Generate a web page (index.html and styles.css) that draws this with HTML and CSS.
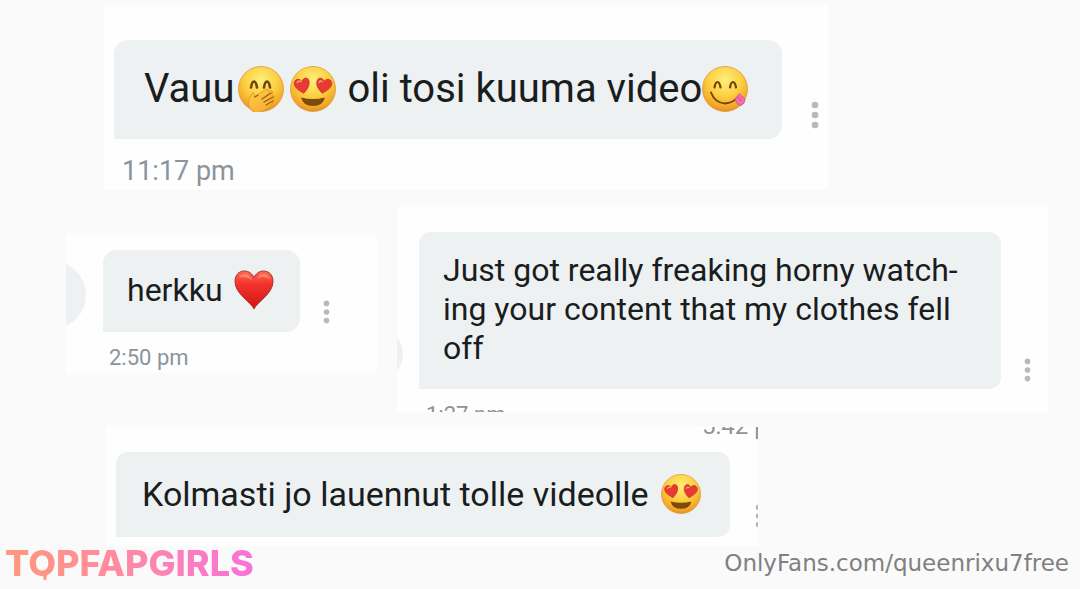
FILE: index.html
```html
<!DOCTYPE html>
<html lang="fi">
<head>
<meta charset="utf-8">
<meta name="viewport" content="width=device-width, initial-scale=1">
<title>Messages</title>
<link rel="stylesheet" href="styles.css">
</head>
<body>
<svg class="defs" aria-hidden="true">
  <defs>
    <radialGradient id="face" cx=".5" cy=".3" r=".72">
      <stop offset="0" stop-color="#ffee7c"/><stop offset=".5" stop-color="#fdd043"/><stop offset=".85" stop-color="#f4a526"/><stop offset="1" stop-color="#dd8a20"/>
    </radialGradient>
    <linearGradient id="red" x1="0" y1="0" x2="0" y2="1">
      <stop offset="0" stop-color="#ff6a55"/><stop offset=".35" stop-color="#f3322c"/><stop offset="1" stop-color="#cf1414"/>
    </linearGradient>
    <linearGradient id="hand" x1="0" y1="0" x2="1" y2="1">
      <stop offset="0" stop-color="#ffd04a"/><stop offset="1" stop-color="#f5a52c"/>
    </linearGradient>
    <symbol id="heart" viewBox="0 0 40 40">
      <path d="M20 39C17 32 1 24 1 11.500C1 5 5 1 10.500 1C15 1 18.500 4 20 7.500C21.500 4 25 1 29.500 1C35 1 39 5 39 11.500C39 24 23 32 20 39Z" fill="url(#red)" stroke="#a73531" stroke-width="1"/>
      <path d="M5 8Q8 3 13 4Q17 6 18 10Q10 5 5 8ZM23 9Q26 3 31 4Q35 5 36 9Q29 5 23 9Z" fill="#ff9b85" opacity=".65"/>
    </symbol>
    <symbol id="love" viewBox="0 0 46 46">
      <circle cx="23" cy="23" r="22.500" fill="url(#face)" stroke="#d99a3c" stroke-width=".8"/>
      <path d="M12.500 27.500C9.500 25 4.500 21.500 4.500 17C4.500 12.500 10 11 12.500 15.500C14.500 11 20 12 19.500 17C19 22 15.500 25 12.500 27.500Z" transform="rotate(-8 12 19)" fill="#e83a32" stroke="#c22c22" stroke-width=".7"/>
      <path d="M33.500 27.500C30.500 25 26.500 22 26.500 17C26.500 12 31.500 11 33.500 15.500C36 11 41.500 12.500 41.500 17C41.500 21.500 36.500 25 33.500 27.500Z" transform="rotate(8 34 19)" fill="#e83a32" stroke="#c22c22" stroke-width=".7"/>
      <path d="M7 17Q9 13.500 11.500 16M29 17Q30 13.500 32.500 16" stroke="#ff9784" stroke-width="1.500" fill="none"/>
      <path d="M11 31.500Q23 34.500 35 31.500Q33 40 23 40Q13 40 11 31.500Z" fill="#7b4b0c"/>
    </symbol>
    <symbol id="yum" viewBox="0 0 46 46">
      <circle cx="23" cy="23" r="22.500" fill="url(#face)" stroke="#d99a3c" stroke-width=".8"/>
      <path d="M12.500 21.500Q13.500 16 15.500 16Q17.500 16 18.500 21.500M28 21.500Q29 16 31 16Q33 16 34 21.500" fill="none" stroke="#71440b" stroke-width="2.200" stroke-linecap="round"/>
      <path d="M9 26.500Q13 37 23 37.500Q31 37 36 31" fill="none" stroke="#71440b" stroke-width="1.900" stroke-linecap="round"/>
      <path d="M33 33L37.500 27.500L43 33Q43 38 39 39.500Q35 39.500 33 33Z" fill="#f36da7" stroke="#d84e86" stroke-width=".8"/>
      <path d="M36 31L39.500 35" stroke="#cd4d80"/>
    </symbol>
    <symbol id="giggle" viewBox="0 0 46 46">
      <circle cx="23" cy="23" r="22.500" fill="url(#face)" stroke="#d99a3c" stroke-width=".8"/>
      <path d="M13 21.500Q14 15.500 16 15.500Q18 15.500 19 21.500M26 21.500Q27 15.500 29 15.500Q31 15.500 32 21.500" fill="none" stroke="#71440b" stroke-width="2.600" stroke-linecap="round"/>
      <path d="M13 44Q9 39 11 34L14 27Q17 25 16 31L28 23Q31 22 30 25L34 25Q36 26 34 28L36 30Q37 32 35 34L35 37Q29 44 23 46Q17 48 13 44Z" fill="url(#hand)" stroke="#df8c22" stroke-width=".7"/>
      <path d="M17 31L20 29M24 33L33 27M26 36L35 31M28 39L35 35" fill="none" stroke="#9a5c12" stroke-width="1.200" stroke-linecap="round"/>
    </symbol>
    <symbol id="dots" viewBox="0 0 8 28">
      <circle cx="4" cy="4" r="3.300"/><circle cx="4" cy="14" r="3.300"/><circle cx="4" cy="24" r="3.300"/>
    </symbol>
  </defs>
</svg>
<main class="page">
  <article class="panel panel-hero">
    <div class="row">
      <p class="bubble"><span>Vauu</span><svg class="emoji emoji-first" role="img" aria-label="giggling face"><use href="#giggle"/></svg><svg class="emoji" role="img" aria-label="heart eyes"><use href="#love"/></svg><span class="spaced">oli tosi kuuma video</span><svg class="emoji emoji-end" role="img" aria-label="yum face"><use href="#yum"/></svg></p>
      <button class="more" aria-label="More options"><svg><use href="#dots"/></svg></button>
    </div>
    <time class="time">11:17 pm</time>
  </article>

  <div class="pair">
    <article class="panel panel-small">
      <span class="avatar"></span>
      <div class="row">
        <p class="bubble">herkku <svg class="emoji" role="img" aria-label="heart"><use href="#heart"/></svg></p>
        <button class="more" aria-label="More options"><svg><use href="#dots"/></svg></button>
      </div>
      <time class="time">2:50 pm</time>
    </article>
    <article class="panel panel-long">
      <span class="avatar"></span>
      <div class="row">
        <p class="bubble">Just got really freaking horny watch-<br>ing your content that my clothes fell<br>off</p>
        <button class="more" aria-label="More options"><svg><use href="#dots"/></svg></button>
      </div>
      <time class="time">1:27 pm</time>
    </article>
  </div>

  <article class="panel panel-last">
    <div class="strip"><time class="time">5:42 pm</time></div>
    <div class="row">
      <p class="bubble">Kolmasti jo lauennut tolle videolle <svg class="emoji" role="img" aria-label="heart eyes"><use href="#love"/></svg></p>
      <button class="more" aria-label="More options"><svg><use href="#dots"/></svg></button>
    </div>
  </article>

  <footer class="footer">
    <div class="brand"><span class="brand-name">TOPFAPGIRLS</span><svg class="drip" viewBox="0 0 8 12" aria-hidden="true"><path d="M1 0H7Q5 2 5.500 5V9Q4 13 2.500 9V5Q3 3 1 0Z" fill="#ff9583"/></svg></div>
    <span class="source">OnlyFans.com/queenrixu7free</span>
  </footer>
</main>
</body>
</html>
```
FILE: styles.css
```css
* { box-sizing: border-box; }

body {
  margin: 0;
  background: #fafafb;
  color: #191d20;
  font-family: Roboto, "Liberation Sans", sans-serif;
}

.defs { position: absolute; width: 0; height: 0; }

.page { padding-top: 5px; overflow: hidden; }

.panel {
  position: relative;
  overflow: hidden;
  background: #fefefe;
}

.row { display: flex; }

.bubble {
  flex: 1;
  display: flex;
  align-items: center;
  margin: 0;
  background: #eef1f2;
  border-radius: 14px 14px 14px 0;
  white-space: pre;
}

.emoji { flex: none; overflow: visible; }

.more {
  flex: none;
  display: flex;
  justify-content: center;
  align-items: flex-end;
  padding: 0;
  border: 0;
  background: none;
  fill: #b7b9bc;
}

.more svg { flex: none; width: 8px; height: 28px; }

.time { display: block; color: #8b949b; }

.panel-hero {
  width: 67%;
  margin-left: 104px;
  padding: 35px 0 0 10px;
  height: 185px;
}
.panel-hero .bubble { height: 99px; padding: 0 0 2px 30px; font-size: 40px; }
.panel-hero .emoji { width: 46px; height: 46px; margin-left: 6px; }
.panel-hero .emoji-first { margin-left: 4px; }
.panel-hero .emoji-end { margin-left: 0; }
.panel-hero .spaced { margin-left: 11px; }
.panel-hero .more { width: 46px; padding: 0 0 10px 20px; }
.panel-hero .time { padding-left: 8px; font-size: 27px; line-height: 32px; margin-top: 16px; }

.pair {
  display: grid;
  grid-template-columns: minmax(0, 311fr) minmax(0, 651fr);
  align-items: start;
  gap: 20px;
  margin: 17px 32px 0 66px;
}

.panel-small { height: 138px; margin-top: 28px; padding: 15px 0 0 37px; }
.panel-small .bubble { height: 82px; padding: 0 0 2px 24px; font-size: 32px; }
.panel-small .emoji { width: 40px; height: 40px; margin-left: 4px; }
.panel-small .more { width: 77px; padding: 0 24px 8px 0; }
.panel-small .more svg { width: 7px; height: 24px; }
.panel-small .time { padding-left: 6px; font-size: 22px; line-height: 28px; margin-top: 12px; }

.avatar {
  position: absolute;
  border-radius: 50%;
  background: #eef1f2;
}
.panel-small .avatar { left: -48px; top: 26px; width: 68px; height: 68px; }
.panel-long .avatar { left: -46px; top: 121px; width: 52px; height: 52px; }

.panel-long { height: 205px; padding: 25px 0 0 22px; }
.panel-long .bubble { height: 157px; padding: 0 0 2px 24px; font-size: 32px; line-height: 39px; border-radius: 12px 12px 12px 0; }
.panel-long .more { width: 47px; padding: 0 0 7px 5px; }
.panel-long .more svg { width: 7px; height: 24px; }
.panel-long .time { padding-left: 7px; font-size: 22px; line-height: 28px; margin-top: 12px; }

.panel-last { width: 652px; max-width: 100%; height: 119px; margin: 15px 0 0 106px; padding-left: 10px; }
.strip { display: flex; align-items: flex-end; justify-content: flex-end; height: 25px; padding-bottom: 12px; }
.strip .time { flex: none; width: 56px; font-size: 24px; line-height: 28px; white-space: nowrap; }
.panel-last .bubble { height: 85px; padding: 0 0 2px 26px; font-size: 34px; border-radius: 12px 12px 12px 0; }
.panel-last .emoji { width: 40px; height: 40px; margin-left: 4px; }
.panel-last .more { width: 32px; justify-content: flex-end; padding-bottom: 9px; margin-right: -4px; }
.panel-last .more svg { width: 7px; height: 24px; }

.footer {
  display: flex;
  justify-content: space-between;
  align-items: center;
  height: 34px;
  padding: 0 11px 0 5px;
}

.brand { position: relative; }
.brand-name {
  font: 800 36px/36px Inter, sans-serif;
  color: transparent;
  background: linear-gradient(90deg, #ff987b, #ff8ba2 45%, #f971d8);
  -webkit-background-clip: text;
  background-clip: text;
}
.drip { position: absolute; left: 36px; top: 29px; width: 8px; height: 12px; }

.source { color: #808080; font: 23px/28px "DejaVu Sans", sans-serif; }
```
